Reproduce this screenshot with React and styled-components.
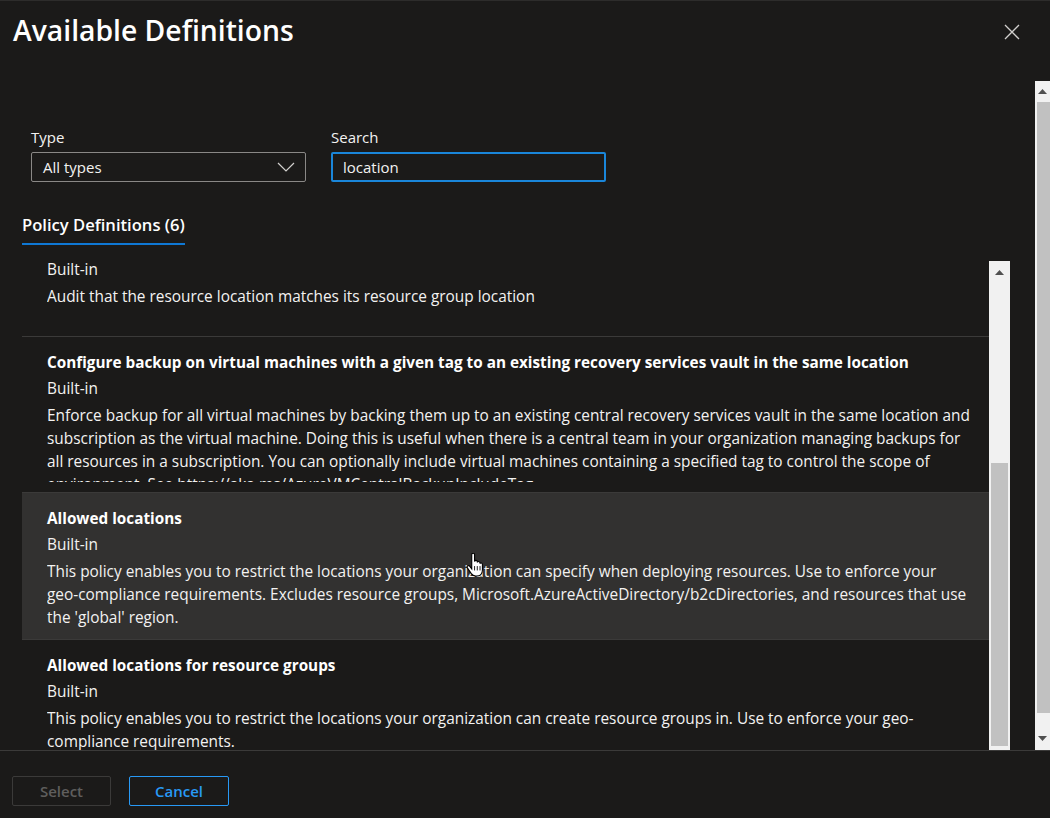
import React from "react";
import styled, { createGlobalStyle } from "styled-components";

const GlobalStyle = createGlobalStyle`
  html, body {
    margin: 0;
    padding: 0;
    background: #1b1a19;
  }
  body {
    font-family: "Open Sans", "Noto Sans", sans-serif;
    color: #f3f2f1;
  }
  * {
    box-sizing: border-box;
  }
`;

const Panel = styled.div`
  width: 1050px;
  height: 818px;
  display: flex;
  flex-direction: column;
  background: #1b1a19;
  border-top: 1px solid #2d2c2b;
  overflow: hidden;
`;

const Header = styled.header`
  height: 80px;
  flex: none;
  display: flex;
  align-items: flex-start;
  justify-content: space-between;
  padding: 11px 30px 0 13px;
`;

const Title = styled.h1`
  margin: 0;
  font-size: 28.3px;
  font-weight: 600;
  line-height: 36px;
  color: #ffffff;
`;

const CloseButton = styled.button`
  margin-top: 11px;
  width: 17px;
  height: 17px;
  padding: 0;
  border: none;
  background: transparent;
  display: flex;
  align-items: center;
  justify-content: center;
  cursor: pointer;
`;

const Body = styled.div`
  flex: 1;
  min-height: 0;
  display: flex;
`;

const Content = styled.div`
  flex: 1;
  min-width: 0;
  display: flex;
  flex-direction: column;
  padding: 0 25px 0 22px;
`;

const Filters = styled.div`
  display: flex;
  gap: 25px;
  margin-top: 46px;
  padding-left: 9px;
`;

const Field = styled.div`
  display: flex;
  flex-direction: column;
  gap: 5px;
`;

const Label = styled.label`
  font-size: 15px;
  line-height: 20px;
  color: #f3f2f1;
`;

const SelectBox = styled.div`
  width: 275px;
  height: 30px;
  display: flex;
  align-items: center;
  justify-content: space-between;
  padding: 0 10px 0 11px;
  border: 1px solid #8a8886;
  border-radius: 2px;
  font-size: 15px;
  color: #f3f2f1;
`;

const SearchInput = styled.input`
  width: 275px;
  height: 30px;
  padding: 0 10px;
  border: 2px solid #1a86d9;
  border-radius: 2px;
  background: transparent;
  outline: none;
  font-family: inherit;
  font-size: 15px;
  color: #f3f2f1;
`;

const Tabs = styled.div`
  display: flex;
  margin-top: 32px;
`;

const Tab = styled.div`
  font-size: 16.6px;
  font-weight: 600;
  line-height: 22px;
  padding-bottom: 7px;
  border-bottom: 2px solid #0f78d4;
  color: #ffffff;
`;

const ListArea = styled.div`
  flex: 1;
  min-height: 0;
  display: flex;
  margin-top: 16px;
`;

const ListViewport = styled.div`
  flex: 1;
  min-width: 0;
  overflow: hidden;
`;

const ListInner = styled.div`
  margin-top: -43px;
`;

const Item = styled.div`
  position: relative;
  padding: 14px 12px ${(p) => p.$pb}px 25px;
  border-bottom: 1px solid #3b3a39;
  background: ${(p) => (p.$hover ? "#323130" : "transparent")};
`;

const ItemTitle = styled.div`
  font-size: 15.3px;
  font-weight: 700;
  line-height: 22px;
  margin-bottom: 5px;
  color: #ffffff;
`;

const ItemKind = styled.div`
  font-size: 15.4px;
  line-height: 22px;
  margin-bottom: 4px;
`;

const ItemDesc = styled.div`
  font-size: 15.4px;
  line-height: 23px;
  max-width: 930px;
  max-height: ${(p) => (p.$clip ? `${p.$clip}px` : "none")};
  overflow: hidden;
`;

const NoWrap = styled.span`
  white-space: nowrap;
`;

const Cursor = styled.svg`
  position: absolute;
  left: 444px;
  top: 60px;
`;

const ScrollTrack = styled.div`
  flex: none;
  width: ${(p) => p.$w}px;
  background: #f1f1f1;
  display: flex;
  flex-direction: column;
  align-items: center;
`;

const ScrollArrow = styled.div`
  flex: none;
  height: ${(p) => p.$h}px;
  width: 100%;
  display: flex;
  align-items: center;
  justify-content: center;
`;

const ScrollThumb = styled.div`
  flex: none;
  align-self: ${(p) => p.$align || "center"};
  width: ${(p) => p.$w}px;
  height: ${(p) => p.$h}px;
  margin-top: ${(p) => p.$top}px;
  background: #c1c1c1;
`;

const Spacer = styled.div`
  flex: 1;
`;

const Footer = styled.footer`
  height: 68px;
  flex: none;
  display: flex;
  align-items: flex-start;
  gap: 18px;
  padding: 25px 0 0 12px;
  border-top: 1px solid #3b3a39;
`;

const Button = styled.button`
  width: ${(p) => p.$w}px;
  height: 30px;
  border-radius: 2px;
  background: transparent;
  font-family: inherit;
  font-size: 15px;
  font-weight: 600;
  border: 1px solid ${(p) => (p.$primary ? "#2899f5" : "#3b3a39")};
  color: ${(p) => (p.$primary ? "#2899f5" : "#5f5e5d")};
  cursor: ${(p) => (p.disabled ? "default" : "pointer")};
`;

const items = [
  {
    title: "Audit resource location matches resource group location",
    desc: "Audit that the resource location matches its resource group location",
    pb: 28,
  },
  {
    title:
      "Configure backup on virtual machines with a given tag to an existing recovery services vault in the same location",
    desc:
      "Enforce backup for all virtual machines by backing them up to an existing central recovery services vault in the same location and subscription as the virtual machine. Doing this is useful when there is a central team in your organization managing backups for all resources in a subscription. You can optionally include virtual machines containing a specified tag to control the scope of environment. See https://aka.ms/AzureVMCentralBackupIncludeTag.",
    clip: 78,
    pb: 10,
  },
  {
    title: "Allowed locations",
    desc: (
      <>
        This policy enables you to restrict the locations your organization can specify when
        deploying resources. Use to enforce your <NoWrap>geo-compliance</NoWrap> requirements.
        Excludes resource groups, Microsoft.AzureActiveDirectory/b2cDirectories, and resources that
        use the 'global' region.
      </>
    ),
    hover: true,
    pb: 10,
  },
  {
    title: "Allowed locations for resource groups",
    desc:
      "This policy enables you to restrict the locations your organization can create resource groups in. Use to enforce your geo-compliance requirements.",
    pb: 11,
  },
];

const UpArrow = () => (
  <svg width={9} height={5} viewBox="0 0 9 5">
    <path d="M4.5 0 L9 5 L0 5 Z" fill="#505050" />
  </svg>
);

const DownArrow = () => (
  <svg width={9} height={5} viewBox="0 0 9 5">
    <path d="M0 0 L9 0 L4.5 5 Z" fill="#505050" />
  </svg>
);

const HandCursor = () => (
  <Cursor width="18" height="24" viewBox="0 0 16 22">
    <path
      d="M5 1.5c0-.8.6-1.3 1.3-1.3s1.3.5 1.3 1.3v6.3c.2-.6.7-1 1.3-1 .7 0 1.2.5 1.2 1.2v.6c.2-.5.7-.8 1.2-.8.7 0 1.2.5 1.2 1.2v.7c.2-.4.6-.6 1.1-.6.7 0 1.2.5 1.2 1.2v5.2c0 3.2-2.2 5.6-5.3 5.6H8.6c-1.7 0-3.1-.8-4-2.2L1 13.6c-.4-.6-.2-1.4.4-1.8.6-.4 1.3-.2 1.7.3L5 14.6V1.5z"
      fill="#ffffff"
      stroke="#000000"
      strokeWidth="1"
    />
    <path d="M7.6 12v4 M10.1 12v4 M12.6 12v4" stroke="#000000" strokeWidth="0.8" />
  </Cursor>
);

export default function App() {
  return (
    <>
      <GlobalStyle />
      <Panel>
        <Header>
          <Title>Available Definitions</Title>
          <CloseButton aria-label="Close">
            <svg width="16" height="16" viewBox="0 0 16 16">
              <path d="M1 1 L15 15 M15 1 L1 15" stroke="#d2d0ce" strokeWidth="1.3" />
            </svg>
          </CloseButton>
        </Header>

        <Body>
          <Content>
            <Filters>
              <Field>
                <Label>Type</Label>
                <SelectBox>
                  All types
                  <svg width="18" height="10" viewBox="0 0 18 10">
                    <path d="M1 1 L9 9 L17 1" fill="none" stroke="#d2d0ce" strokeWidth="1.2" />
                  </svg>
                </SelectBox>
              </Field>
              <Field>
                <Label>Search</Label>
                <SearchInput defaultValue="location" />
              </Field>
            </Filters>

            <Tabs>
              <Tab>Policy Definitions (6)</Tab>
            </Tabs>

            <ListArea>
              <ListViewport>
                <ListInner>
                  {items.map((it, i) => (
                    <Item key={i} $hover={it.hover} $pb={it.pb}>
                      <ItemTitle>{it.title}</ItemTitle>
                      <ItemKind>Built-in</ItemKind>
                      <ItemDesc $clip={it.clip}>{it.desc}</ItemDesc>
                      {it.hover && <HandCursor />}
                    </Item>
                  ))}
                </ListInner>
              </ListViewport>
              <ScrollTrack $w={21}>
                <ScrollArrow $h={22}>
                  <UpArrow />
                </ScrollArrow>
                <ScrollThumb $w={17} $h={283} $top={180} />
              </ScrollTrack>
            </ListArea>
          </Content>

          <ScrollTrack $w={15}>
            <ScrollArrow $h={20}>
              <UpArrow />
            </ScrollArrow>
            <ScrollThumb $w={13} $h={611} $top={1} $align="flex-end" />
            <Spacer />
            <ScrollArrow $h={24}>
              <DownArrow />
            </ScrollArrow>
          </ScrollTrack>
        </Body>

        <Footer>
          <Button $w={99} disabled>
            Select
          </Button>
          <Button $w={100} $primary>
            Cancel
          </Button>
        </Footer>
      </Panel>
    </>
  );
}
